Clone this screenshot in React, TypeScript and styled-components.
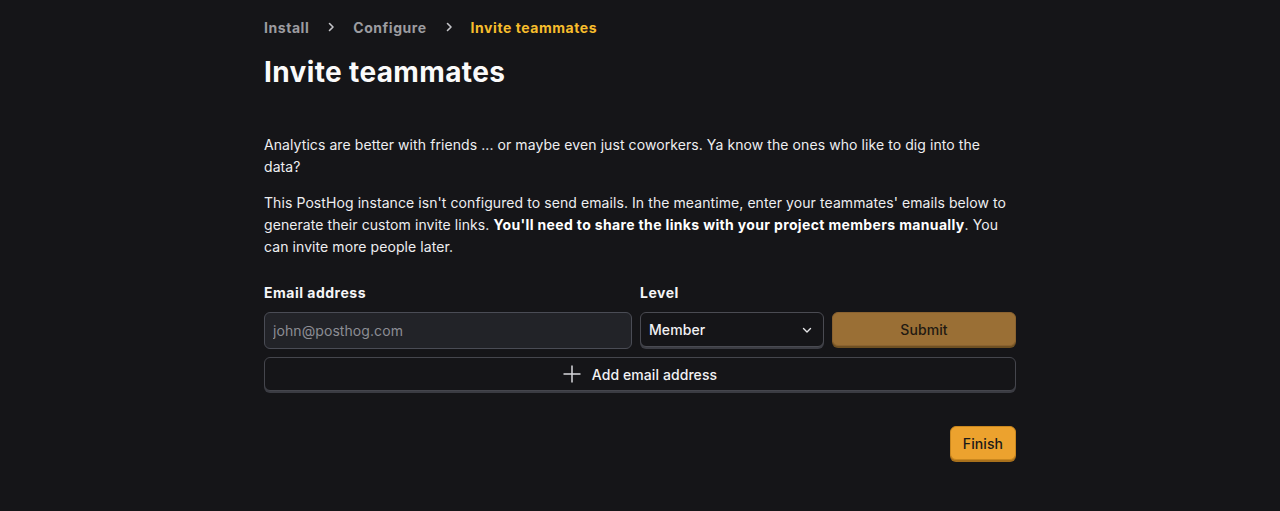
import React from "react";
import styled, { createGlobalStyle } from "styled-components";

const Global = createGlobalStyle`
  html, body { margin: 0; padding: 0; background: #151518; }
  body { font-family: Inter, "Noto Sans", sans-serif; color: #eeeef0; letter-spacing: 0.08px; }
  * { box-sizing: border-box; }
`;

const Page = styled.div`
  width: 752px;
  margin: 0 auto;
  padding-top: 16px;
  min-height: 511px;
`;

const Crumbs = styled.nav`
  display: flex;
  align-items: center;
  height: 22px;
  font-size: 14px;
  font-weight: 700;
  letter-spacing: 0.55px;
`;

const Crumb = styled.span<{ $active?: boolean }>`
  color: ${(p) => (p.$active ? "#f7bd2c" : "#9c9ca0")};
`;

const Sep = styled.span`
  display: inline-flex;
  width: 44px;
  justify-content: center;
  color: #c4c4c8;
`;

const Title = styled.h1`
  margin: 17px 0 0;
  font-size: 28px;
  line-height: 34px;
  font-weight: 700;
  letter-spacing: 0.37px;
  color: #fafafa;
`;

const Body = styled.div`
  margin-top: 45px;
  font-size: 14px;
  line-height: 22px;
  color: #eeeef0;
`;

const P = styled.p`
  margin: 0 0 14px;
  strong { font-weight: 700; letter-spacing: 0.35px; color: #fff; }
`;

const Form = styled.div`
  margin-top: 26px;
  display: grid;
  grid-template-columns: 2fr 1fr 1fr;
  column-gap: 8px;
  row-gap: 8px;
`;

const Label = styled.label`
  font-size: 14px;
  font-weight: 700;
  letter-spacing: 0.5px;
  line-height: 18px;
  color: #f5f5f7;
  height: 20px;
`;

const Input = styled.input`
  font-family: inherit;
  letter-spacing: inherit;
  font-size: 14px;
  height: 37px;
  padding: 0 8px;
  border-radius: 6px;
  border: 1px solid #4a4c55;
  background: #222328;
  color: #eee;
  outline: none;
  &::placeholder { color: #8c8d94; }
`;

const Select = styled.div`
  height: 35px;
  border: 1px solid #4a4b52;
  border-radius: 6px;
  background: #151518;
  box-shadow: 0 2px 0 #3c3d44;
  display: flex;
  align-items: center;
  justify-content: space-between;
  padding: 0 10px 0 8px;
  font-size: 14px;
  font-weight: 500;
  color: #f2f2f4;
`;

const Btn = styled.button<{ $variant: "primary" | "disabled" | "secondary" }>`
  font-family: inherit;
  letter-spacing: inherit;
  font-size: 14px;
  font-weight: 500;
  height: 34px;
  border-radius: 6px;
  display: inline-flex;
  align-items: center;
  justify-content: center;
  gap: 11px;
  cursor: pointer;
  ${(p) =>
    p.$variant === "primary"
      ? `background:#eca22e;border:1px solid #c9871f;color:#1a1a1a;box-shadow:0 2px 0 #a8701c;`
      : p.$variant === "disabled"
      ? `background:#9a6f35;border:1px solid #8a6230;color:#221a12;box-shadow:0 2px 0 #6f5022;`
      : `background:#151518;border:1px solid #45464d;color:#f2f2f4;box-shadow:0 2px 0 #3a3b42;`}
`;

const Wide = styled(Btn)`
  grid-column: 1 / -1;
`;

const Footer = styled.div`
  display: flex;
  justify-content: flex-end;
  margin-top: 35px;
`;

const FinishBtn = styled(Btn)`
  padding: 0 12px;
`;

const Chevron = () => (
  <svg width="12" height="12" viewBox="0 0 12 12" fill="none">
    <path d="M4.5 2.5 8 6l-3.5 3.5" stroke="currentColor" strokeWidth="1.6" strokeLinecap="round" strokeLinejoin="round" />
  </svg>
);

const ChevronDown = () => (
  <svg width="12" height="12" viewBox="0 0 12 12" fill="none">
    <path d="M2.5 4.5 6 8l3.5-3.5" stroke="#e6e6e8" strokeWidth="1.4" strokeLinecap="round" strokeLinejoin="round" />
  </svg>
);

const Plus = () => (
  <svg width="18" height="18" viewBox="0 0 18 18" fill="none">
    <path d="M9 0.5v17M0.5 9h17" stroke="#d8d8dc" strokeWidth="1.5" />
  </svg>
);

export default function App() {
  return (
    <>
      <Global />
      <Page>
        <Crumbs>
          <Crumb>Install</Crumb>
          <Sep><Chevron /></Sep>
          <Crumb>Configure</Crumb>
          <Sep><Chevron /></Sep>
          <Crumb $active>Invite teammates</Crumb>
        </Crumbs>
        <Title>Invite teammates</Title>
        <Body>
          <P>
            Analytics are better with friends ... or maybe even just coworkers. Ya know the ones who like to dig into the
            data?
          </P>
          <P>
            This PostHog instance isn't configured to send emails. In the meantime, enter your teammates' emails below to
            generate their custom invite links. <strong>You'll need to share the links with your project members manually</strong>. You
            can invite more people later.
          </P>
        </Body>
        <Form>
          <Label>Email address</Label>
          <Label>Level</Label>
          <span />
          <Input placeholder="john@posthog.com" />
          <Select>
            <span>Member</span>
            <ChevronDown />
          </Select>
          <Btn $variant="disabled">Submit</Btn>
          <Wide $variant="secondary">
            <Plus />
            Add email address
          </Wide>
        </Form>
        <Footer>
          <FinishBtn $variant="primary">Finish</FinishBtn>
        </Footer>
      </Page>
    </>
  );
}
